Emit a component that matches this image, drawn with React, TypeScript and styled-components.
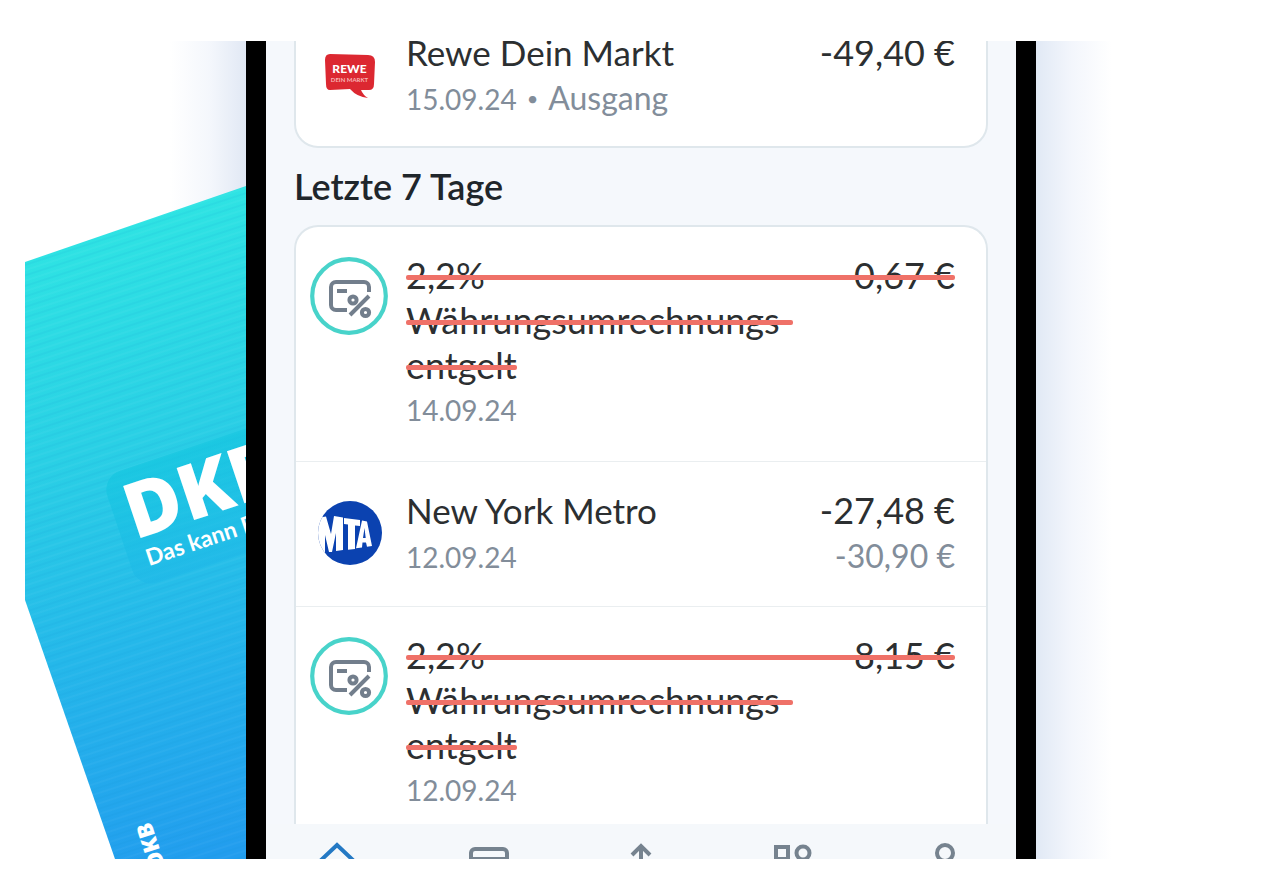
import React from "react";
import styled, { createGlobalStyle } from "styled-components";

const GlobalStyle = createGlobalStyle`
  * { box-sizing: border-box; }
  body { margin: 0; background: #fff; font-family: Lato, "Open Sans", sans-serif; }
`;

const Page = styled.main`
  padding: 41px 0 22px 25px;
`;

const Stage = styled.div`
  display: grid;
  grid-template-columns: 221px minmax(0, 790px) minmax(0, 1fr);
  overflow: hidden;
`;

const Backdrop = styled.div`
  display: flex;
  min-height: 0;
  background: linear-gradient(to left, #e1e8f4, #f4f7fc 36px, #fff 76px);
`;

const Glow = styled.div`
  background: linear-gradient(to right, #e1e9f5, #f3f6fc 36px, #fff 76px);
`;

const BankCard = styled.svg`
  display: block;
  width: 221px;
  height: 818px;
  font-family: Lato, sans-serif;
  fill: #fff;
`;

const Wordmark = styled.text`
  font-family: "Open Sans", sans-serif;
  font-weight: 800;
`;

const Phone = styled.section`
  background: #f5f8fc;
  border: solid #000;
  border-width: 0 20px;
`;

const Feed = styled.div`
  padding: 0 28px;
  overflow: hidden;
`;

const Group = styled.ul<{ $edge: "above" | "below" }>`
  list-style: none;
  margin: ${(p) => (p.$edge === "above" ? "-39px 0 0" : "0")};
  padding: 0;
  background: #fff;
  border: 2px solid #dfe7ec;
  border-radius: ${(p) => (p.$edge === "above" ? "24px" : "24px 24px 0 0")};
  ${(p) => p.$edge === "below" && "border-bottom: 0;"}
`;

const Heading = styled.h2`
  margin: 16px 0;
  font-size: 36px;
  line-height: 45px;
  font-weight: 600;
  color: #1f262b;
`;

const Row = styled.li<{ $bottom?: number }>`
  display: flex;
  gap: 18px;
  padding: 26px 31px ${(p) => p.$bottom ?? 28}px 14px;
  & + & { border-top: 1px solid #eaeef0; }
`;

const Badge = styled.svg`
  flex: none;
  width: 78px;
  height: 78px;
  margin-top: 4px;
  font-family: Lato, sans-serif;
`;

const Details = styled.div`
  flex: 1;
  min-width: 0;
`;

const Line = styled.div`
  position: relative;
  display: flex;
  justify-content: space-between;
  align-items: baseline;
  height: 45px;
  line-height: 45px;
  font-size: 35px;
  color: #2c2f31;
`;

const Amount = styled.span`
  font-size: 36px;
`;

const Meta = styled(Line)`
  font-size: 28px;
  color: #828d9a;
`;

const MetaGroup = styled.span`
  display: flex;
  align-items: baseline;
  gap: 10px;
`;

const MetaText = styled.span`
  font-size: 32px;
`;

const Dot = styled.span`
  align-self: center;
  font-size: 20px;
`;

const StruckLine = styled(Line).attrs({ as: "s" })<{ $fit?: boolean }>`
  width: ${(p) => (p.$fit ? "fit-content" : "auto")};
  font-size: 36px;
  text-decoration: none;
  &::after {
    content: "";
    position: absolute;
    left: 0;
    right: 0;
    top: 22px;
    height: 5px;
    border-radius: 2px;
    background: #ef7168;
  }
`;

const TabBar = styled.nav`
  display: flex;
  justify-content: space-between;
  height: 35px;
  padding: 18px 49px 0;
  overflow: hidden;
  background: #f5f8fb;
`;

const Tab = styled.button<{ $active?: boolean }>`
  flex: none;
  width: 44px;
  height: 44px;
  padding: 0;
  border: 0;
  background: none;
  color: ${(p) => (p.$active ? "#2479c4" : "#76838f")};
`;

const TabIcon = styled.svg`
  display: block;
  fill: none;
  stroke: currentColor;
  stroke-width: 4;
`;

const Artwork = () => (
  <BankCard viewBox="0 0 221 818" role="img" aria-label="DKB Karte">
    <defs>
      <linearGradient id="card" gradientUnits="userSpaceOnUse" x1="60" y1="170" x2="240" y2="800">
        <stop offset="0" stopColor="#2fe5e3" />
        <stop offset="0.35" stopColor="#2ad0e5" />
        <stop offset="0.65" stopColor="#25b8ea" />
        <stop offset="1" stopColor="#229dee" />
      </linearGradient>
      <linearGradient id="plate" x1="0" y1="0" x2="0" y2="1">
        <stop offset="0" stopColor="#12c5df" />
        <stop offset="1" stopColor="#1fb8e8" />
      </linearGradient>
      <pattern id="ridges" width="40" height="10" patternUnits="userSpaceOnUse" patternTransform="rotate(-18)">
        <rect y="2" width="40" height="2" fill="#0a86c8" opacity="0.08" />
        <rect y="7" width="40" height="2" fill="#fff" opacity="0.03" />
      </pattern>
      <clipPath id="shape">
        <path d="M0 221 221 145V818H90L0 559Z" />
      </clipPath>
    </defs>
    <g clipPath="url(#shape)">
      <rect width="221" height="818" fill="url(#card)" />
      <rect width="221" height="818" fill="url(#ridges)" />
      <rect width="260" height="118" rx="20" fill="url(#plate)" opacity="0.6" transform="translate(76 436) rotate(-18.5)" />
      <Wordmark transform="translate(110 499) rotate(-18.5)" fontSize="77">DKB</Wordmark>
      <text transform="translate(124 525) rotate(-18.5)" fontSize="23" fontWeight="700">Das kann Bank</text>
      <Wordmark transform="translate(140 824) rotate(-108)" fontSize="22">DKB</Wordmark>
    </g>
  </BankCard>
);

const FeeBadge = () => (
  <Badge viewBox="0 0 78 78" aria-hidden="true">
    <circle cx="39" cy="39" r="36.8" fill="#fff" stroke="#48d3ca" strokeWidth="4.2" />
    <g fill="none" stroke="#727e8c" strokeWidth="4">
      <path d="M37 53H26a5 5 0 0 1-5-5V30a5 5 0 0 1 5-5h28a5 5 0 0 1 5 5v5" />
      <path d="M27 34h10M40 58 59 39" />
      <circle cx="43" cy="43" r="3.6" />
      <circle cx="55.500" cy="55.500" r="3.600" />
    </g>
  </Badge>
);

const ReweBadge = () => (
  <Badge viewBox="0 0 78 78" role="img" aria-label="Rewe">
    <path d="M20 20 58 21q7 0 7 7L64 50q0 6-5 6H51q2 5 7 8-11-1-18-9L20 56q-4 0-4-6L15 26q0-6 5-6Z" fill="#dc2831" />
    <text x="39.500" y="39" textAnchor="middle" fontSize="12" fontWeight="900" fill="#fff">REWE</text>
    <text x="39.500" y="48" textAnchor="middle" fontSize="6" fontWeight="700" fill="#f8b5b5">DEIN MARKT</text>
  </Badge>
);

const MetroBadge = () => (
  <Badge viewBox="0 0 78 78" role="img" aria-label="MTA">
    <defs>
      <clipPath id="disc"><circle cx="40" cy="41" r="32" /></clipPath>
    </defs>
    <circle cx="40" cy="41" r="32" fill="#0b42b0" />
    <g clipPath="url(#disc)" fill="#fff">
      <path d="M6 26 16 24.500 21 42 24 24 33 25.500V58L26 59V41L22 60H19L15 43V61H6Z" />
      <path d="M34 26 50 28V34L45 33.500V57L38 57.800V32.500L34 32Z" />
      <path fillRule="evenodd" d="M52 28.500 57 29.500 62 54 57 54.800 56 50.500H52.500L52 55.500 46 56.300ZM54.500 36 53 46H55.700Z" />
    </g>
  </Badge>
);

const FeeRow = ({ amount, date, bottom }: { amount: string; date: string; bottom?: number }) => (
  <Row $bottom={bottom}>
    <FeeBadge />
    <Details>
      <StruckLine><span>2,2%</span><Amount>{amount}</Amount></StruckLine>
      <StruckLine $fit>Währungsumrechnungs-</StruckLine>
      <StruckLine $fit>entgelt</StruckLine>
      <Meta>{date}</Meta>
    </Details>
  </Row>
);

export default function App() {
  return (
    <>
      <GlobalStyle />
      <Page>
        <Stage>
          <Backdrop><Artwork /></Backdrop>
          <Phone>
            <Feed>
              <Group $edge="above">
                <Row $bottom={26}>
                  <ReweBadge />
                  <Details>
                    <Line><span>Rewe Dein Markt</span><Amount>-49,40 €</Amount></Line>
                    <Meta>
                      <MetaGroup>
                        <span>15.09.24</span><Dot>•</Dot><MetaText>Ausgang</MetaText>
                      </MetaGroup>
                    </Meta>
                  </Details>
                </Row>
              </Group>
              <Heading>Letzte 7 Tage</Heading>
              <Group $edge="below">
                <FeeRow amount="0,67 €" date="14.09.24" />
                <Row>
                  <MetroBadge />
                  <Details>
                    <Line><span>New York Metro</span><Amount>-27,48 €</Amount></Line>
                    <Meta><span>12.09.24</span><MetaText>-30,90 €</MetaText></Meta>
                  </Details>
                </Row>
                <FeeRow amount="8,15 €" date="12.09.24" bottom={11} />
              </Group>
            </Feed>
            <TabBar aria-label="Navigation">
              <Tab $active aria-label="Start">
                <TabIcon viewBox="0 0 44 44"><path d="M3 21 22 3 41 21M8 18V42H36V18" /></TabIcon>
              </Tab>
              <Tab aria-label="Karten">
                <TabIcon viewBox="0 0 44 44"><rect x="4" y="7" width="36" height="28" rx="4" /><path d="M4 17H40" /></TabIcon>
              </Tab>
              <Tab aria-label="Überweisen">
                <TabIcon viewBox="0 0 44 44"><path d="M22 4V42M13 13 22 4 31 13" /></TabIcon>
              </Tab>
              <Tab aria-label="Produkte">
                <TabIcon viewBox="0 0 44 44"><rect x="5" y="5" width="12" height="12" /><circle cx="32" cy="11" r="6.500" /><rect x="5" y="27" width="13" height="13" /><rect x="26" y="27" width="13" height="13" /></TabIcon>
              </Tab>
              <Tab aria-label="Profil">
                <TabIcon viewBox="0 0 44 44"><circle cx="22" cy="11" r="8" /><path d="M6 40q0-16 16-16t16 16" /></TabIcon>
              </Tab>
            </TabBar>
          </Phone>
          <Glow />
        </Stage>
      </Page>
    </>
  );
}
